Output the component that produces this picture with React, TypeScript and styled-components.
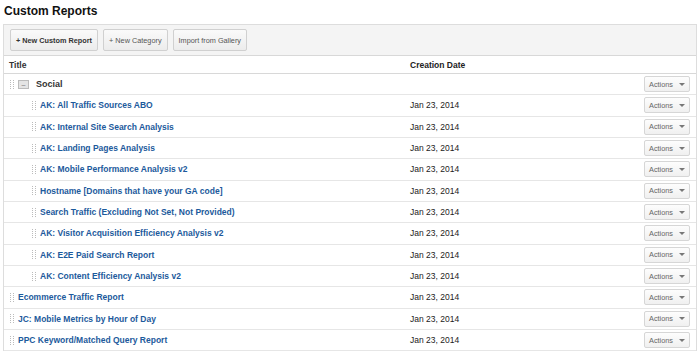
import styled, { createGlobalStyle } from 'styled-components'

const GlobalStyle = createGlobalStyle`
  body {
    margin: 0;
    background: #fff;
    font-family: Arial, "Liberation Sans", sans-serif;
    color: #222;
  }
`

type Report = { name: string, date: string, child?: boolean }

const reports: Report[] = [
  { name: 'AK: All Traffic Sources ABO', date: 'Jan 23, 2014', child: true },
  { name: 'AK: Internal Site Search Analysis', date: 'Jan 23, 2014', child: true },
  { name: 'AK: Landing Pages Analysis', date: 'Jan 23, 2014', child: true },
  { name: 'AK: Mobile Performance Analysis v2', date: 'Jan 23, 2014', child: true },
  { name: 'Hostname [Domains that have your GA code]', date: 'Jan 23, 2014', child: true },
  { name: 'Search Traffic (Excluding Not Set, Not Provided)', date: 'Jan 23, 2014', child: true },
  { name: 'AK: Visitor Acquisition Efficiency Analysis v2', date: 'Jan 23, 2014', child: true },
  { name: 'AK: E2E Paid Search Report', date: 'Jan 23, 2014', child: true },
  { name: 'AK: Content Efficiency Analysis v2', date: 'Jan 23, 2014', child: true },
  { name: 'Ecommerce Traffic Report', date: 'Jan 23, 2014' },
  { name: 'JC: Mobile Metrics by Hour of Day', date: 'Jan 23, 2014' },
  { name: 'PPC Keyword/Matched Query Report', date: 'Jan 23, 2014' }
]

function Handle () {
  return (
    <svg width="4" height="9" viewBox="0 0 4 9">
      {[0, 2, 4, 6, 8].map(y => (
        <g key={y}>
          <rect x="0" y={y} width="1" height="1" fill="#bbb" />
          <rect x="3" y={y} width="1" height="1" fill="#bbb" />
        </g>
      ))}
    </svg>
  )
}

function App () {
  return (
    <Page>
      <GlobalStyle />
      <Heading>Custom Reports</Heading>
      <Panel>
        <Toolbar>
          <ToolButton $strong>+ New Custom Report</ToolButton>
          <ToolButton>+ New Category</ToolButton>
          <ToolButton>Import from Gallery</ToolButton>
        </Toolbar>
        <HeaderRow>
          <TitleCell>Title</TitleCell>
          <DateCell>Creation Date</DateCell>
        </HeaderRow>
        <Row>
          <TitleCell $indent={6}>
            <Handle />
            <Collapse>–</Collapse>
            <CategoryName>Social</CategoryName>
          </TitleCell>
          <DateCell />
          <ActionsButton>Actions <Caret /></ActionsButton>
        </Row>
        {reports.map(r => (
          <Row key={r.name}>
            <TitleCell $indent={r.child ? 28 : 6}>
              <Handle />
              <ReportLink>{r.name}</ReportLink>
            </TitleCell>
            <DateCell>{r.date}</DateCell>
            <ActionsButton>Actions <Caret /></ActionsButton>
          </Row>
        ))}
      </Panel>
    </Page>
  )
}

const Page = styled.div`
  padding: 3px 3px 0 3px;
  width: 694px;
`
const Heading = styled.h1`
  margin: 0 0 5px 1px;
  font-size: 12px;
  font-weight: bold;
  color: #111;
  line-height: 16px;
`
const Panel = styled.div`
  border-left: 1px solid #ddd;
  border-right: 1px solid #ddd;
  border-top: 1px solid #ddd;
`
const Toolbar = styled.div`
  display: flex;
  gap: 5px;
  padding: 4px 6px;
  height: 22px;
  background: #f4f4f4;
  border-bottom: 1px solid #d8d8d8;
`
const ToolButton = styled.div<{ $strong?: boolean }>`
  display: flex;
  align-items: center;
  padding: 0 5px;
  height: 20px;
  font-size: 7.3px;
  color: ${p => p.$strong ? '#333' : '#555'};
  font-weight: ${p => p.$strong ? 'bold' : 'normal'};
  border: 1px solid #d0d0d0;
  border-radius: 2px;
  background: linear-gradient(#fafafa, #ececec);
`
const Row = styled.div`
  display: flex;
  align-items: center;
  height: 20.33px;
  border-bottom: 1px solid #e6e6e6;
  padding-right: 6px;
`
const HeaderRow = styled(Row)`
  height: 17px;
  border-bottom: 1px solid #d8d8d8;
  font-size: 8.6px;
  font-weight: bold;
  color: #333;
`
const TitleCell = styled.div<{ $indent?: number }>`
  display: flex;
  align-items: center;
  gap: 4px;
  width: 406px;
  padding-left: ${p => p.$indent ?? 5}px;
  box-sizing: border-box;
`
const DateCell = styled.div`
  flex: 1;
  font-size: 8.5px;
  color: #222;
`
const Collapse = styled.span`
  display: inline-flex;
  align-items: center;
  justify-content: center;
  width: 9px;
  height: 7px;
  border: 1px solid #bbb;
  background: #e4e4e4;
  color: #777;
  font-size: 7px;
  line-height: 7px;
`
const CategoryName = styled.span`
  margin-left: 3px;
  font-size: 9px;
  font-weight: bold;
  color: #333;
`
const ReportLink = styled.a`
  font-size: 8.5px;
  font-weight: bold;
  color: #1c5a9c;
  text-decoration: none;
`
const ActionsButton = styled.div`
  display: flex;
  align-items: center;
  gap: 6px;
  height: 14px;
  padding: 0 4px;
  font-size: 7.3px;
  color: #666;
  border: 1px solid #d6d6d6;
  border-radius: 2px;
  background: linear-gradient(#fdfdfd, #f0f0f0);
`
const Caret = styled.span`
  width: 0;
  height: 0;
  border-left: 3px solid transparent;
  border-right: 3px solid transparent;
  border-top: 3px solid #777;
`

export default App
